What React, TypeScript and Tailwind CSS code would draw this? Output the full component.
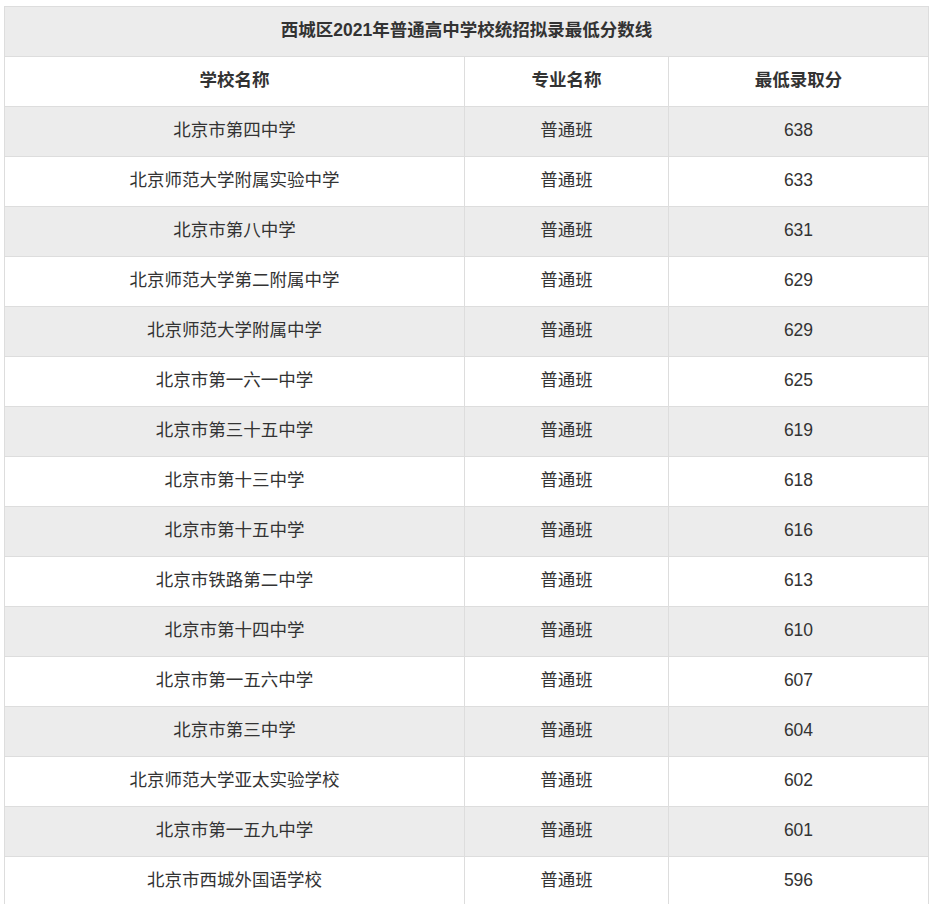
import React from "react";

const rows: [string, string, string][] = [
  ["北京市第四中学", "普通班", "638"],
  ["北京师范大学附属实验中学", "普通班", "633"],
  ["北京市第八中学", "普通班", "631"],
  ["北京师范大学第二附属中学", "普通班", "629"],
  ["北京师范大学附属中学", "普通班", "629"],
  ["北京市第一六一中学", "普通班", "625"],
  ["北京市第三十五中学", "普通班", "619"],
  ["北京市第十三中学", "普通班", "618"],
  ["北京市第十五中学", "普通班", "616"],
  ["北京市铁路第二中学", "普通班", "613"],
  ["北京市第十四中学", "普通班", "610"],
  ["北京市第一五六中学", "普通班", "607"],
  ["北京市第三中学", "普通班", "604"],
  ["北京师范大学亚太实验学校", "普通班", "602"],
  ["北京市第一五九中学", "普通班", "601"],
  ["北京市西城外国语学校", "普通班", "596"],
];

const cell =
  "h-[50px] pb-[2px] flex items-center justify-center border-r border-b border-[#dddddd]";

export default function App() {
  return (
    <div
      className="bg-white w-[930px] h-[904px] overflow-hidden pl-[4px] pt-[6px] text-[#333333] text-[17.5px]"
      style={{ fontFamily: '"Liberation Sans", "Noto Sans CJK SC", sans-serif' }}
    >
      <div className="w-[925px] border-l border-t border-[#dddddd]">
        <div className={`${cell} bg-[#ececec] font-bold w-[924px]`}>
          西城区2021年普通高中学校统招拟录最低分数线
        </div>
        <div className="grid grid-cols-[460px_204px_260px] bg-white font-bold">
          <div className={cell}>学校名称</div>
          <div className={cell}>专业名称</div>
          <div className={cell}>最低录取分</div>
        </div>
        {rows.map((r, i) => (
          <div
            key={i}
            className={`grid grid-cols-[460px_204px_260px] ${
              i % 2 === 0 ? "bg-[#ececec]" : "bg-white"
            }`}
          >
            <div className={cell}>{r[0]}</div>
            <div className={cell}>{r[1]}</div>
            <div className={cell}>{r[2]}</div>
          </div>
        ))}
      </div>
    </div>
  );
}
